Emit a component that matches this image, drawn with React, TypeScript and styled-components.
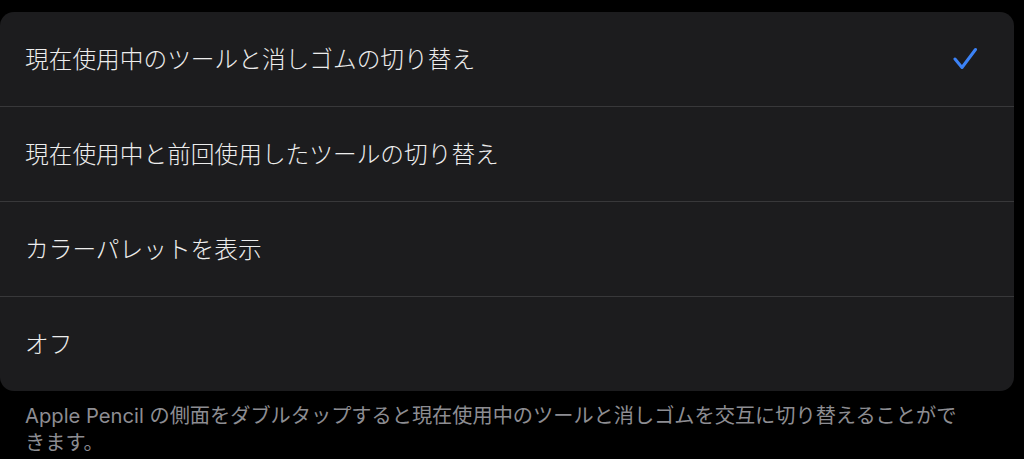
import React from "react";
import styled, { createGlobalStyle } from "styled-components";

const GlobalStyle = createGlobalStyle`
  html, body {
    margin: 0;
    padding: 0;
    background: #000000;
  }
  body {
    font-family: "Noto Sans CJK JP", "Noto Sans", sans-serif;
    -webkit-font-smoothing: antialiased;
  }
`;

const Page = styled.div`
  width: 1024px;
  height: 459px;
  box-sizing: border-box;
  padding: 12px 10px 0 0;
  display: flex;
  flex-direction: column;
  overflow: hidden;
`;

const Card = styled.div`
  background: #1c1c1e;
  border-radius: 14px;
  display: flex;
  flex-direction: column;
  overflow: hidden;
`;

const Row = styled.div<{ $last?: boolean }>`
  height: 94px;
  padding-left: 24px;
  display: flex;
  align-items: stretch;
  border-bottom: ${(p) => (p.$last ? "none" : "1px solid #38383a")};
`;

const RowInner = styled.div`
  flex: 1;
  display: flex;
  align-items: center;
  justify-content: space-between;
  padding-right: 36px;
`;

const Label = styled.span`
  color: #ededed;
  font-size: 23.7px;
  font-weight: 300;
  line-height: 1;
  padding-left: 1px;
`;

const Check = styled.svg`
  width: 25px;
  height: 24px;
  display: block;
`;

const Footer = styled.p`
  margin: 0;
  padding: 11px 46px 0 25px;
  color: #8d8d92;
  font-family: "Inter", "Noto Sans CJK JP", "Noto Sans", sans-serif;
  font-size: 20.2px;
  font-weight: 400;
  line-height: 27px;
`;

const options = [
  "現在使用中のツールと消しゴムの切り替え",
  "現在使用中と前回使用したツールの切り替え",
  "カラーパレットを表示",
  "オフ",
];

export default function App() {
  return (
    <>
      <GlobalStyle />
      <Page>
        <Card>
          {options.map((o, i) => (
            <Row key={o} $last={i === options.length - 1}>
              <RowInner>
                <Label>{o}</Label>
                {i === 0 && (
                  <Check viewBox="0 0 25 24">
                    <path
                      d="M2 12 L9 20.5 L22.5 2.5"
                      fill="none"
                      stroke="#3b82f6"
                      strokeWidth="3"
                      strokeLinecap="round"
                      strokeLinejoin="round"
                    />
                  </Check>
                )}
              </RowInner>
            </Row>
          ))}
        </Card>
        <Footer>
          Apple Pencil の側面をダブルタップすると現在使用中のツールと消しゴムを交互に切り替えることができます。
        </Footer>
      </Page>
    </>
  );
}
